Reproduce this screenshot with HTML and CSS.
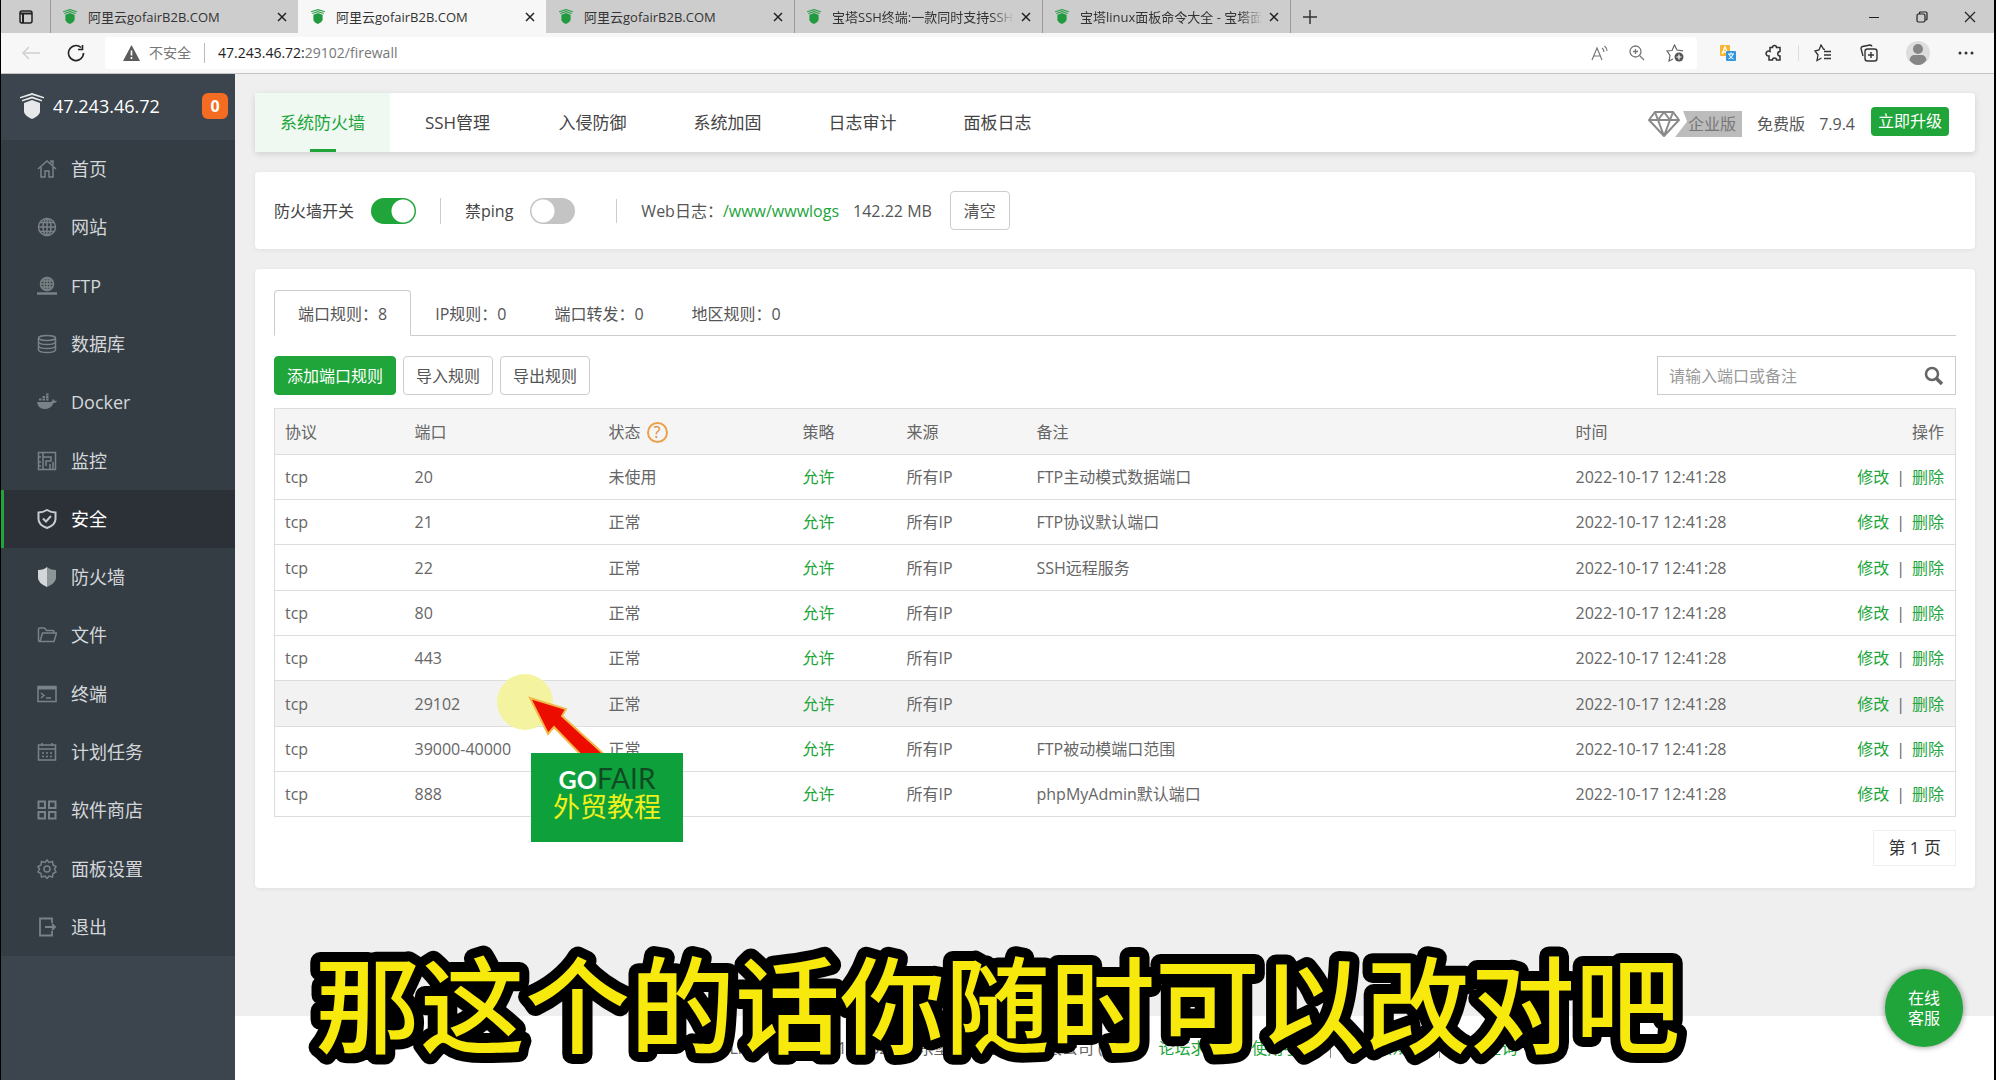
FILE: index.html
```html
<!DOCTYPE html>
<html lang="zh-CN">
<head>
<meta charset="utf-8">
<meta name="viewport" content="width=device-width, initial-scale=1">
<title>阿里云gofairB2B.COM</title>
<link rel="stylesheet" href="styles.css">
</head>
<body>
<svg class="defs" aria-hidden="true">
  <symbol id="bt" viewBox="0 0 24 26">
    <path d="M12 0 24 4v1.500L12 2 0 5.500V4z"/>
    <path d="M12 3.500 22 7v1.500L12 5.500 2 8.500V7z"/>
    <path d="M4 10l8-3 8 3v9q-1 4-8 7-7-3-8-7z"/>
  </symbol>
  <symbol id="x" viewBox="0 0 10 10"><path d="M1 1l8 8M9 1L1 9" fill="none" stroke="currentColor" stroke-width="1.500"/></symbol>
</svg>

<header class="browser">
  <div class="tabstrip">
    <button class="lead" aria-label="标签页操作"><svg width="14" height="14" viewBox="0 0 14 14" fill="none" stroke="#222" stroke-width="1.500"><rect x="1" y="1" width="12" height="12" rx="2"/><path d="M1 3.500h12M4 4v9" stroke-width="2"/></svg></button>
    <div class="tab"><svg class="fav"><use href="#bt"/></svg><span>阿里云gofairB2B.COM</span><button aria-label="关闭"><svg><use href="#x"/></svg></button></div>
    <div class="tab current"><svg class="fav"><use href="#bt"/></svg><span>阿里云gofairB2B.COM</span><button aria-label="关闭"><svg><use href="#x"/></svg></button></div>
    <div class="tab"><svg class="fav"><use href="#bt"/></svg><span>阿里云gofairB2B.COM</span><button aria-label="关闭"><svg><use href="#x"/></svg></button></div>
    <div class="tab"><svg class="fav"><use href="#bt"/></svg><span class="fade">宝塔SSH终端:一款同时支持SSH和</span><button aria-label="关闭"><svg><use href="#x"/></svg></button></div>
    <div class="tab"><svg class="fav"><use href="#bt"/></svg><span class="fade">宝塔linux面板命令大全 - 宝塔面</span><button aria-label="关闭"><svg><use href="#x"/></svg></button></div>
    <button class="newtab" aria-label="新建标签页"><svg width="16" height="16" viewBox="0 0 16 16" stroke="#333" stroke-width="1.500"><path d="M8 1v14M1 8h14"/></svg></button>
    <div class="winctl">
      <button aria-label="最小化"><svg width="12" height="12" viewBox="0 0 12 12" stroke="#222"><path d="M1 6.500h10"/></svg></button>
      <button aria-label="还原"><svg width="12" height="12" viewBox="0 0 12 12" fill="none" stroke="#222" stroke-width="1.200"><rect x="1" y="3" width="8" height="8" rx="1.500"/><path d="M3.500 3V2q0-1 1-1H10q1 0 1 1v6q0 1-1.500 1"/></svg></button>
      <button aria-label="关闭窗口"><svg width="12" height="12" viewBox="0 0 12 12" stroke="#222" stroke-width="1.200"><path d="M1 1l10 10M11 1L1 11"/></svg></button>
    </div>
  </div>
  <div class="toolbar">
    <button class="back" aria-label="返回"><svg width="20" height="16" viewBox="0 0 20 16" fill="none" stroke="#d0d0d0" stroke-width="1.500"><path d="M19 8H2M8 2L2 8l6 6"/></svg></button>
    <button class="reload" aria-label="刷新"><svg width="18" height="18" viewBox="0 0 18 18" fill="none" stroke="#222" stroke-width="1.600"><path d="M16.500 9A7.500 7.500 0 1 1 14 3.500M15.500 1v4.500H11"/></svg></button>
    <div class="address">
      <svg width="17" height="16" viewBox="0 0 17 16"><path d="M8.500 0 17 16H0z" fill="#5c5c5c"/><path d="M8.500 5.500v5M8.500 12v2" stroke="#fff" stroke-width="1.600"/></svg>
      <span class="unsafe">不安全</span>
      <span class="url"><b>47.243.46.72:</b>29102/firewall</span>
      <div class="inbar">
        <svg width="17" height="16" viewBox="0 0 17 16" fill="none" stroke="#777" stroke-width="1.200"><path d="M1 15 6 3l5 12M3 11h6M11 3q2 1.500 2 4M13.500 1q2.500 2 2.500 5"/></svg>
        <svg width="16" height="16" viewBox="0 0 16 16" fill="none" stroke="#777" stroke-width="1.300"><circle cx="6.500" cy="6.500" r="5.500"/><path d="M10.500 10.500 15 15M4 6.500h5M6.500 4v5"/></svg>
        <svg width="18" height="18" viewBox="0 0 18 18" fill="none" stroke="#666" stroke-width="1.200"><path d="M7 15 3 17l1-5.500L1 7l5-.5L8.500 1 11 6l6 .8"/><circle cx="13" cy="13" r="4.500" fill="#555" stroke="none"/><path d="M13 10.500v5M10.500 13h5" stroke="#fff"/></svg>
      </div>
    </div>
    <div class="tools">
      <svg width="18" height="18" viewBox="0 0 18 18"><rect x="1" y="1" width="10" height="11" rx="1" fill="#f6b632"/><path d="M3 10 6 3l3 7M4 8h4" fill="none" stroke="#fff" stroke-width="1.300"/><rect x="7" y="7" width="10" height="10" rx="1" fill="#3595dc"/><path d="M9 10h6M12 8.500V10M14 10q-1 4-4.500 5M10 10q1 4 4.500 5" fill="none" stroke="#fff"/></svg>
      <svg width="18" height="18" viewBox="0 0 18 18" fill="none" stroke="#333" stroke-width="1.500"><path d="M5 3.500h2.500a2 2 0 0 1 4 0H15v4a2 2 0 1 0 0 4.500v4h-3.500a2 2 0 0 0-4 0H4v-4a2.500 2.500 0 1 1 1-4.500z"/></svg>
      <i></i>
      <svg width="18" height="18" viewBox="0 0 18 18" fill="none" stroke="#333" stroke-width="1.300"><path d="M11 5.500 9.500 5.200 7 1 5 6 1 7l3 4-1 5.500 4.500-2.500M10 7.500h7M10 11h7M10 14.500h7"/></svg>
      <svg width="18" height="18" viewBox="0 0 18 18" fill="none" stroke="#333" stroke-width="1.400"><path d="M3 12 1 4.500Q1 3 2.500 2.500L10 1q1.500 0 2 1.500"/><rect x="5" y="5" width="12" height="12" rx="2.500"/><path d="M11 8v6M8 11h6"/></svg>
      <svg width="24" height="24" viewBox="0 0 24 24"><circle cx="12" cy="12" r="12" fill="#ddd"/><circle cx="12" cy="8" r="5" fill="#858585"/><path d="M3.500 19q1-5 5-5h7q4 0 5 5-3.500 5-8.500 5t-8.500-5z" fill="#858585"/></svg>
      <svg width="16" height="4" viewBox="0 0 16 4" fill="#333"><circle cx="2" cy="2" r="1.500"/><circle cx="8" cy="2" r="1.500"/><circle cx="14" cy="2" r="1.500"/></svg>
    </div>
  </div>
</header>

<div class="panel">
  <aside class="sidebar">
    <div class="server"><svg width="24" height="26" fill="#e6e8e9"><use href="#bt"/></svg><span>47.243.46.72</span><b>0</b></div>
    <nav class="menu">
      <a href="#"><svg viewBox="0 0 20 20"><path d="M1 10 10 2l9 8M4 8v10h4v-6h4v6h4V8M14 4V2h2v4"/></svg>首页</a>
      <a href="#"><svg viewBox="0 0 20 20"><circle cx="10" cy="10" r="8.500"/><ellipse cx="10" cy="10" rx="4" ry="8.500"/><path d="M10 1v18M1.500 10h17M3 5.500h14M3 14.500h14"/></svg>网站</a>
      <a href="#"><svg viewBox="0 0 20 20"><circle cx="10" cy="8" r="6.500"/><ellipse cx="10" cy="8" rx="3" ry="6.500"/><path d="M10 1v14M4 8h12M4 5h12M4 11h12"/><path d="M0 17.500h20" stroke-width="2.500"/></svg>FTP</a>
      <a href="#"><svg viewBox="0 0 20 20"><ellipse cx="10" cy="4" rx="8.500" ry="2.500"/><path d="M1.500 4v12q1 2.500 8.500 2.500t8.500-2.500V4M1.500 8q1 2.500 8.500 2.500T18.500 8M1.500 12q1 2.500 8.500 2.500t8.500-2.500"/></svg>数据库</a>
      <a href="#"><svg viewBox="0 0 20 20"><path d="M0 10h14q2-1 1.500-3 2 .5 2 2 1.500-.5 2.500 0-1 2-3.500 2-2.500 6-9 6T0 10z" fill="currentColor" stroke="none"/><path d="M2 7.500h2.500M5.500 7.500H8M9 7.500h2.500M5.500 5H8M9 5h2.500M9 2.500h2.500" stroke-width="2"/></svg>Docker</a>
      <a href="#"><svg viewBox="0 0 20 20"><path d="M1.500 1.500h17v17h-17zM6 1v18M6 6h8v4H9v5M13 13v5M16 11v7M1 6h3M1 11h3M1 15h3"/></svg>监控</a>
      <a href="#" class="on"><svg viewBox="0 0 20 20"><path d="M10 1q4 2.500 8.500 2.500V10q0 6-8.500 9-8.500-3-8.500-9V3.500Q6 3.500 10 1zM6 9.500l3 3 5-5.500" stroke-width="2"/></svg>安全</a>
      <a href="#"><svg viewBox="0 0 20 20"><path d="M10 0q3 3 9 3v8q0 5-9 9z" fill="#8e9599" stroke="none"/><path d="M10 0Q7 3 1 3v8q0 5 9 9z" fill="#d3d7d9" stroke="none"/></svg>防火墙</a>
      <a href="#"><svg viewBox="0 0 20 20"><path d="M3 16.500q-1.500 0-1.500-1.500V4q0-1 1-1h5l2 2.500h6.500q1 0 1 1V8M3 16.500 5.500 8h14L17 16.500z"/></svg>文件</a>
      <a href="#"><svg viewBox="0 0 20 20"><path d="M1 2.500h18v15H1zM4 9l3 2.500L4 14M9 14h5"/><path d="M1 4h18" stroke-width="3"/></svg>终端</a>
      <a href="#"><svg viewBox="0 0 20 20"><path d="M1.500 3h17v15h-17zM1.500 7h17M5 1v3M15 1v3M5 11h2M9 11h2M13 11h2M5 14.500h2M9 14.500h2M13 14.500h2"/></svg>计划任务</a>
      <a href="#"><svg viewBox="0 0 20 20"><path d="M1.500 1.500h6.500v6.500H1.500zM12 1.500h6.500v6.500H12zM1.500 12h6.500v6.500H1.500zM12 12h6.500v6.500H12z" stroke-width="2"/></svg>软件商店</a>
      <a href="#"><svg viewBox="0 0 20 20"><path d="M10 1l2 2.500 3.500-1 .5 3.500 3 1.500-1.500 2.500L19 13l-3 1.500-.5 3.500-3.500-1-2 2.500L8 17l-3.500 1L4 14.500 1 13l1.500-3L1 7.500 4 6l.5-3.500 3.500 1z"/><circle cx="10" cy="10" r="3"/></svg>面板设置</a>
      <a href="#"><svg viewBox="0 0 20 20"><path d="M15 6V1.500H3v17h12V14M8 10h10M15 7l3 3-3 3" stroke-width="1.800"/></svg>退出</a>
    </nav>
  </aside>

  <div class="page">
    <main class="content">
      <section class="card topbar">
        <nav class="topnav">
          <a href="#" class="on">系统防火墙</a><a href="#">SSH管理</a><a href="#">入侵防御</a><a href="#">系统加固</a><a href="#">日志审计</a><a href="#">面板日志</a>
        </nav>
        <div class="edition">
          <svg width="32" height="26" viewBox="0 0 32 26" fill="none" stroke="#8a8a8a" stroke-width="2"><path d="M7 1h18l6 8-15 16L1 9zM1 9h30M10 9l6 16 6-16M7 1l3 8 6-8 6 8 3-8"/></svg>
          <span class="pro">企业版</span>
          <span>免费版</span><span class="ver">7.9.4</span>
          <button class="upgrade">立即升级</button>
        </div>
      </section>

      <section class="card switches">
        <label>防火墙开关<input type="checkbox" checked></label>
        <label class="split">禁ping<input type="checkbox"></label>
        <div class="split log"><span>Web日志：</span><a href="#">/www/wwwlogs</a><span class="size">142.22 MB</span><button class="btn">清空</button></div>
      </section>

      <section class="card rules">
        <nav class="subtabs">
          <a href="#" class="on">端口规则：8</a><a href="#">IP规则：0</a><a href="#">端口转发：0</a><a href="#">地区规则：0</a>
        </nav>
        <div class="actions">
          <button class="btn primary">添加端口规则</button>
          <button class="btn">导入规则</button>
          <button class="btn">导出规则</button>
          <div class="search">
            <input type="text" placeholder="请输入端口或备注" aria-label="请输入端口或备注">
            <button aria-label="搜索"><svg width="20" height="20" viewBox="0 0 20 20" fill="none" stroke="#666" stroke-width="2.500"><circle cx="8" cy="8" r="6"/><path d="M12.500 12.500 18 18" stroke-width="3.500"/></svg></button>
          </div>
        </div>
        <table>
          <colgroup><col class="c-proto"><col class="c-port"><col class="c-port"><col class="c-policy"><col class="c-proto"><col><col class="c-time"><col class="c-ops"></colgroup>
          <thead><tr><th>协议</th><th>端口</th><th>状态<a href="#" class="help">?</a></th><th>策略</th><th>来源</th><th>备注</th><th>时间</th><th>操作</th></tr></thead>
          <tbody>
            <tr><td>tcp</td><td>20</td><td>未使用</td><td><a href="#">允许</a></td><td>所有IP</td><td>FTP主动模式数据端口</td><td>2022-10-17 12:41:28</td><td><a href="#">修改</a><i>|</i><a href="#">删除</a></td></tr>
            <tr><td>tcp</td><td>21</td><td>正常</td><td><a href="#">允许</a></td><td>所有IP</td><td>FTP协议默认端口</td><td>2022-10-17 12:41:28</td><td><a href="#">修改</a><i>|</i><a href="#">删除</a></td></tr>
            <tr><td>tcp</td><td>22</td><td>正常</td><td><a href="#">允许</a></td><td>所有IP</td><td>SSH远程服务</td><td>2022-10-17 12:41:28</td><td><a href="#">修改</a><i>|</i><a href="#">删除</a></td></tr>
            <tr><td>tcp</td><td>80</td><td>正常</td><td><a href="#">允许</a></td><td>所有IP</td><td></td><td>2022-10-17 12:41:28</td><td><a href="#">修改</a><i>|</i><a href="#">删除</a></td></tr>
            <tr><td>tcp</td><td>443</td><td>正常</td><td><a href="#">允许</a></td><td>所有IP</td><td></td><td>2022-10-17 12:41:28</td><td><a href="#">修改</a><i>|</i><a href="#">删除</a></td></tr>
            <tr class="hover"><td>tcp</td><td>29102</td><td>正常</td><td><a href="#">允许</a></td><td>所有IP</td><td></td><td>2022-10-17 12:41:28</td><td><a href="#">修改</a><i>|</i><a href="#">删除</a></td></tr>
            <tr><td>tcp</td><td>39000-40000</td><td>正常</td><td><a href="#">允许</a></td><td>所有IP</td><td>FTP被动模端口范围</td><td>2022-10-17 12:41:28</td><td><a href="#">修改</a><i>|</i><a href="#">删除</a></td></tr>
            <tr><td>tcp</td><td>888</td><td>正常</td><td><a href="#">允许</a></td><td>所有IP</td><td>phpMyAdmin默认端口</td><td>2022-10-17 12:41:28</td><td><a href="#">修改</a><i>|</i><a href="#">删除</a></td></tr>
          </tbody>
        </table>
        <div class="pager"><span>第 1 页</span></div>
        <div class="pointer">
          <svg width="112" height="84" viewBox="0 0 112 84"><circle cx="28" cy="29" r="28" fill="#f4f4a0"/><path d="M33 25 69 36 65 43 110 84H86L57 54 51 61z" fill="#ed0c00" stroke="#f2b84a" stroke-width="2"/></svg>
          <div class="brand"><p><b>GO</b>FAIR</p><strong>外贸教程</strong></div>
        </div>
      </section>
    </main>
    <footer class="footer">
      <span>宝塔Linux面板 ©2014-2022 广东堡塔安全技术有限公司 (bt.cn)</span><a href="#">论坛求助</a><a href="#">使用手册</a><a href="#">微信公众号</a><a href="#">正版查询</a>
    </footer>
  </div>
</div>

<button class="service">在线<br>客服</button>
<svg class="caption" height="150"><text x="50%" y="115">那这个的话你随时可以改对吧</text></svg>
</body>
</html>
```
FILE: styles.css
```css
* { box-sizing: border-box; }

body {
  margin: 0;
  min-height: 100vh;
  display: flex;
  flex-direction: column;
  position: relative;
  overflow-x: hidden;
  border-left: 1px solid #000;
  border-right: 2px solid #000;
  background: #efefef;
  color: #555;
  font: 16px/24px "Open Sans", "Noto Sans CJK SC", sans-serif;
}

a { color: #20a53a; text-decoration: none; }
p { margin: 0; }
i { font-style: normal; }
button, input { font: inherit; color: inherit; margin: 0; }
button { padding: 0; border: 0; background: none; cursor: pointer; white-space: nowrap; }
svg { display: block; flex: none; }
.defs { position: absolute; width: 0; height: 0; }

/* browser window */
.tabstrip { display: flex; height: 33px; background: #cdcdcd; }
.lead { width: 49px; display: grid; place-items: center; }
.tab {
  flex: 0 1 248px;
  min-width: 0;
  display: flex;
  align-items: center;
  gap: 11px;
  padding: 0 11px 0 12px;
  border-left: 1px solid #999;
  font-size: 13px;
  color: #333;
}
.tab.current { background: #f7f7f7; border-color: #f7f7f7; }
.tab.current + .tab { border-color: #cdcdcd; }
.tab span { flex: 1; overflow: hidden; white-space: nowrap; }
.tab .fade { margin-right: -4px; -webkit-mask-image: linear-gradient(90deg, #000 88%, transparent); mask-image: linear-gradient(90deg, #000 88%, transparent); }
.fav { width: 14px; height: 15px; fill: #229a40; }
.tab button svg { width: 10px; height: 10px; color: #222; }
.newtab { width: 38px; display: grid; place-items: center; border-left: 1px solid #999; }
.winctl { margin-left: auto; display: flex; }
.winctl button { width: 48px; display: grid; place-items: center; }

.toolbar {
  display: flex;
  align-items: center;
  height: 41px;
  padding-right: 20px;
  border-bottom: 1px solid #c4c4c4;
  background: #f7f7f7;
}
.back { margin-left: 20px; }
.reload { margin: 0 20px 0 26px; }
.address {
  flex: 1;
  display: flex;
  align-items: center;
  height: 32px;
  padding: 0 13px 0 18px;
  border-radius: 4px;
  background: #fff;
  color: #777;
  font-size: 14px;
}
.unsafe { margin: 0 13px 0 9px; }
.url { padding-left: 13px; border-left: 1px solid #bbb; line-height: 20px; }
.url b { font-weight: 400; color: #222; }
.inbar { margin-left: auto; display: flex; align-items: center; gap: 21px; }
.tools { display: flex; align-items: center; gap: 28px; margin-left: 22px; }
.tools i { width: 1px; height: 16px; margin: 0 -13px; background: #ddd; }

/* panel frame */
.panel { flex: 1; display: flex; }
.sidebar { width: 234px; flex: none; background: #3c444d; }
.server { display: flex; align-items: center; height: 66px; padding: 0 7px 2px 19px; color: #fff; font-size: 18px; }
.server span { margin-left: 9px; }
.server b {
  margin-left: auto;
  width: 26px;
  border-radius: 6px;
  background: #f36c21;
  font-size: 16px;
  line-height: 26px;
  text-align: center;
}
.menu { display: grid; grid-auto-rows: 1fr; min-height: 816px; background: #353d44; }
.menu a {
  display: flex;
  align-items: center;
  gap: 14px;
  padding-left: 33px;
  border-left: 3px solid transparent;
  color: #d3d7da;
  font-size: 18px;
}
.menu svg { width: 20px; height: 20px; fill: none; stroke: currentColor; stroke-width: 1.5; color: #7b8287; }
.menu .on { background: #2c3138; border-color: #20a53a; color: #fff; }
.menu .on svg { color: #c8cbce; }

.page { flex: 1; min-width: 0; display: flex; flex-direction: column; }
.content { display: flex; flex-direction: column; gap: 20px; padding: 19px 19px 20px 20px; }
.card { background: #fff; border-radius: 4px; box-shadow: 0 1px 4px #0001; }

.topbar { display: flex; justify-content: space-between; height: 59px; padding-right: 26px; box-shadow: 0 2px 6px #0002; }
.topnav { display: flex; }
.topnav a { position: relative; width: 135px; line-height: 60px; text-align: center; color: #444; font-size: 17px; }
.topnav .on { background: #eff8f1; color: #20a53a; }
.topnav .on::after { content: ""; position: absolute; left: 50%; bottom: 0; width: 26px; height: 3px; margin-left: -13px; background: #20a53a; }
.edition { display: flex; align-items: center; padding-top: 3px; color: #555; }
.pro {
  margin: 0 15px 0 -5px;
  padding: 0 6px 0 13px;
  background: #bcbcbc;
  color: #777;
  line-height: 26px;
  clip-path: polygon(8px 0, 100% 0, 100% 100%, 0 100%, 12px 40%);
}
.ver { margin: 0 16px 0 14px; }
.upgrade { padding: 0 7px; border-radius: 4px; background: #20a53a; color: #fff; line-height: 29px; align-self: flex-start; margin-top: 11px; }

.switches { display: flex; align-items: center; height: 77px; padding: 0 19px; }
.switches label { display: flex; align-items: center; color: #444; }
.switches label input {
  appearance: none;
  width: 45px;
  height: 26px;
  margin-left: 17px;
  border-radius: 13px;
  background: radial-gradient(circle at 13px 13px, #fff 11px, transparent 12px) #c4c4c4;
}
.switches label input:checked { background: radial-gradient(circle at 32px 13px, #fff 11px, transparent 12px) #20a53a; }
.split { margin-left: 24px; padding-left: 24px; border-left: 1px solid #ccc; line-height: 24px; }
.log { display: flex; align-items: center; height: 24px; margin-left: 41px; }
.size { margin: 0 18px 0 14px; }
.log span { color: #555; }
.btn { height: 39px; padding: 0 12px; border: 1px solid #ccc; border-radius: 4px; background: #fff; color: #555; }
.log .btn { padding: 0 13px; }
.primary { border-color: #20a53a; background: #20a53a; color: #fff; }

/* rules */
.rules { position: relative; padding: 21px 19px 22px; }
.subtabs { display: flex; height: 46px; border-bottom: 1px solid #ccc; }
.subtabs a { padding: 0 23px; border: 1px solid transparent; line-height: 46px; color: #555; }
.subtabs .on { height: 46px; border-color: #ccc #ccc #fff; border-radius: 4px 4px 0 0; background: #fff; }
.actions { display: flex; gap: 7px; margin: 20px 0 13px; }
.search { display: flex; align-items: center; width: 299px; height: 39px; margin-left: auto; padding: 0 11px; border: 1px solid #ccc; }
.search input { flex: 1; min-width: 0; padding: 0; border: 0; outline: 0; }
.search input::placeholder { color: #999; }

table { width: 100%; border: 1px solid #ddd; border-collapse: collapse; table-layout: fixed; color: #666; }
.c-proto { width: 130px; }
.c-port { width: 194px; }
.c-policy { width: 104px; }
.c-time { width: 240px; }
.c-ops { width: 150px; }
th, td { height: 45px; padding: 0 11px 0 10px; border-bottom: 1px solid #ddd; text-align: left; font-weight: 400; white-space: nowrap; }
th, tr:nth-child(3n) td { height: 46px; }
th { background: #f5f5f5; }
th:last-child, td:last-child { text-align: right; }
td i { margin: 0 7px; }
.hover { background: #f2f2f2; }
.help {
  display: inline-block;
  width: 21px;
  height: 21px;
  margin-left: 6px;
  border: 2px solid #eba04c;
  border-radius: 50%;
  color: #e08a2c;
  line-height: 17px;
  text-align: center;
}
.pager { display: flex; justify-content: flex-end; margin-top: 13px; }
.pager span { padding: 0 14px; border: 1px solid #eee; color: #333; font-size: 17px; line-height: 34px; }

/* mouse pointer with its brand sign */
.pointer { position: absolute; left: 242px; top: 404px; }
.brand {
  position: absolute;
  left: 34px;
  top: 80px;
  width: 152px;
  height: 89px;
  padding-top: 10px;
  background: #0ea13b;
  text-align: center;
}
.brand p { color: #104a25; font: 28px/30px Lato, sans-serif; }
.brand b { color: #fff; font-size: 25px; }
.brand strong { display: block; color: #f0f01c; font-size: 27px; font-weight: 400; line-height: 26px; }

.footer {
  display: flex;
  justify-content: center;
  align-items: center;
  min-height: 64px;
  margin-top: auto;
  background: #fff;
  color: #666;
}
.footer a { padding: 0 14px; }
.footer a + a { border-left: 1px solid #888; line-height: 20px; }

.service {
  position: absolute;
  right: 31px;
  bottom: 33px;
  width: 78px;
  height: 78px;
  border-radius: 50%;
  background: #20a53a;
  box-shadow: 0 0 6px #0007;
  color: #fff;
  line-height: 20px;
}
.caption { position: absolute; left: 0; bottom: 0; width: 100%; pointer-events: none; }
.caption text {
  fill: #f8e90c;
  stroke: #000;
  stroke-width: 20px;
  stroke-linejoin: round;
  paint-order: stroke;
  text-anchor: middle;
  font: 500 105px "Noto Sans CJK SC", sans-serif;
}
```
